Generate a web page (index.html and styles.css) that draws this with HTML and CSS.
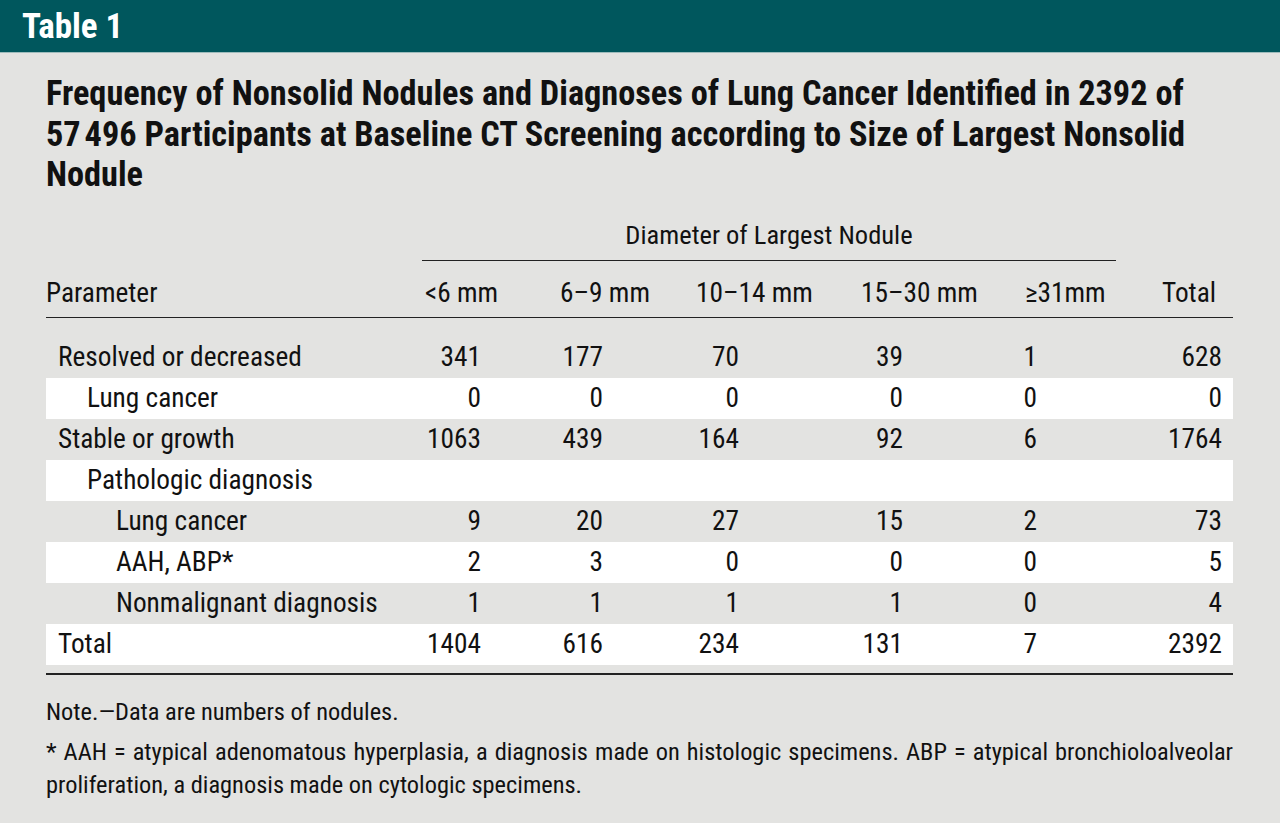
FILE: index.html
```html
<!DOCTYPE html>
<html lang="en">
<head>
<meta charset="utf-8">
<title>Table 1</title>
<link rel="stylesheet" href="styles.css">
</head>
<body>
<header class="bar"><h1 class="bar-title">Table 1</h1></header>
<main class="content">
  <h2 class="caption">Frequency of Nonsolid Nodules and Diagnoses of Lung Cancer Identified in 2392 of 57&#8239;496 Participants at Baseline CT Screening according to Size of Largest Nonsolid Nodule</h2>
  <div class="grid">
    <div class="spanner"><span>Diameter of Largest Nodule</span></div>
    <div class="row head">
      <div class="p">Parameter</div>
      <div class="h">&lt;6 mm</div>
      <div class="h">6–9 mm</div>
      <div class="h">10–14 mm</div>
      <div class="h">15–30 mm</div>
      <div class="h">≥31mm</div>
      <div class="h">Total</div>
    </div>
    <div class="body">
      <div class="row grey"><div class="p l1">Resolved or decreased</div><div class="n c1">341</div><div class="n c2">177</div><div class="n c3">70</div><div class="n c4">39</div><div class="n c5">1</div><div class="n c6">628</div></div>
      <div class="row white"><div class="p l2">Lung cancer</div><div class="n c1">0</div><div class="n c2">0</div><div class="n c3">0</div><div class="n c4">0</div><div class="n c5">0</div><div class="n c6">0</div></div>
      <div class="row grey"><div class="p l1">Stable or growth</div><div class="n c1">1063</div><div class="n c2">439</div><div class="n c3">164</div><div class="n c4">92</div><div class="n c5">6</div><div class="n c6">1764</div></div>
      <div class="row white"><div class="p l2">Pathologic diagnosis</div><div class="n c1"></div><div class="n c2"></div><div class="n c3"></div><div class="n c4"></div><div class="n c5"></div><div class="n c6"></div></div>
      <div class="row grey"><div class="p l3">Lung cancer</div><div class="n c1">9</div><div class="n c2">20</div><div class="n c3">27</div><div class="n c4">15</div><div class="n c5">2</div><div class="n c6">73</div></div>
      <div class="row white"><div class="p l3">AAH, ABP*</div><div class="n c1">2</div><div class="n c2">3</div><div class="n c3">0</div><div class="n c4">0</div><div class="n c5">0</div><div class="n c6">5</div></div>
      <div class="row grey"><div class="p l3">Nonmalignant diagnosis</div><div class="n c1">1</div><div class="n c2">1</div><div class="n c3">1</div><div class="n c4">1</div><div class="n c5">0</div><div class="n c6">4</div></div>
      <div class="row white"><div class="p l1">Total</div><div class="n c1">1404</div><div class="n c2">616</div><div class="n c3">234</div><div class="n c4">131</div><div class="n c5">7</div><div class="n c6">2392</div></div>
    </div>
    <div class="endrule"></div>
  </div>
  <p class="note">Note.—Data are numbers of nodules.</p>
  <p class="foot">* AAH = atypical adenomatous hyperplasia, a diagnosis made on histologic specimens. ABP = atypical bronchioloalveolar proliferation, a diagnosis made on cytologic specimens.</p>
</main>
</body>
</html>
```
FILE: styles.css
```css
html, body {
  margin: 0;
  padding: 0;
}
body {
  width: 1280px;
  height: 823px;
  overflow: hidden;
  background: #e3e3e1;
  color: #111;
  font-family: "Roboto Condensed", "Roboto", "DejaVu Sans", sans-serif;
  font-stretch: 75%;
}
.bar {
  height: 52px;
  background: #00575d;
  border-bottom: 1px solid #9fbcbc;
  display: flex;
  align-items: center;
  padding-left: 22px;
}
.bar-title {
  margin: 0;
  color: #fff;
  font-size: 35px;
  font-weight: bold;
  line-height: 1;
}
.content {
  padding: 20px 47px 0 46px;
}
.caption {
  margin: 0;
  font-size: 34.3px;
  font-weight: bold;
  line-height: 40.5px;
  width: 1190px;
}
.grid {
  margin-top: 25px;
  width: 1187px;
  font-size: 27.3px;
}
.spanner {
  margin-left: 376px;
  width: 694px;
  border-bottom: 1px solid #222;
  text-align: center;
  line-height: 30px;
  padding-bottom: 10px;
  font-size: 26.5px;
}
.row {
  display: grid;
  grid-template-columns: 376px 135px 136px 165px 164px 137px 74px;
  align-items: center;
}
.head {
  line-height: 30px;
  padding: 17px 0 9px;
  border-bottom: 1px solid #222;
}
.h {
  padding-left: 3px;
}
.body {
  margin-top: 19px;
}
.body .row {
  height: 41px;
}
.grey {
  background: #e3e3e1;
}
.white {
  background: #fff;
}
.n {
  text-align: right;
}
.l1 { padding-left: 12px; }
.l2 { padding-left: 41px; }
.l3 { padding-left: 70px; }
.c1 { padding-right: 76px; }
.c2 { padding-right: 90px; }
.c3 { padding-right: 119px; }
.c4 { padding-right: 119px; }
.c5 { padding-right: 122px; }
.c6 { padding-right: 11px; }
.endrule {
  margin-top: 8px;
  border-top: 2px solid #222;
}
.note {
  margin: 20px 0 0;
  font-size: 24.4px;
  line-height: 33px;
}
.foot {
  margin: 7px 0 0;
  font-size: 24.4px;
  line-height: 33px;
  text-align: justify;
  width: 1187px;
}
```
